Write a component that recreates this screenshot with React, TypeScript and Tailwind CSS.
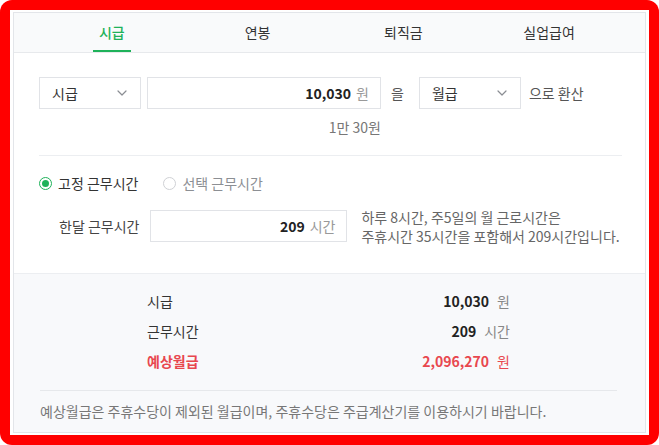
import React from "react";

const font = { fontFamily: '"Noto Sans CJK KR", "Noto Sans", sans-serif' };

function Chevron() {
  return (
    <svg width="10" height="6" viewBox="0 0 10 6" fill="none">
      <polyline points="1,1 5,5 9,1" stroke="#8a8d93" strokeWidth="1.2" strokeLinecap="round" strokeLinejoin="round" />
    </svg>
  );
}

function Select({ label }: { label: string }) {
  return (
    <div className="shrink-0 w-[102px] h-[32px] border border-[#e1e3e7] bg-white flex items-center justify-between pl-[12px] pr-[13px] text-[14px] leading-[20px] text-[#333]">
      <span>{label}</span>
      <Chevron />
    </div>
  );
}

export default function App() {
  const tabs = ["시급", "연봉", "퇴직금", "실업급여"];
  return (
    <div style={font} className="w-[659px] h-[445px] bg-[#ff0000] rounded-[12px] p-[10px] whitespace-nowrap">
      <div className="bg-white h-full px-[3px] pt-[2px] pb-[2px]">
        <div className="h-full border border-[#e3e5e9] flex flex-col bg-white">
          {/* Tabs */}
          <div className="h-[40px] shrink-0 bg-[#f9fafb] border-b border-[#e7e9ec] pl-[25px] pr-[23px] grid grid-cols-4">
            {tabs.map((t, i) => (
              <div key={t} className="flex justify-center h-full">
                <span
                  className={
                    i === 0
                      ? "h-full flex items-center px-[6px] pt-[1px] border-b-[2px] border-[#1fb25a] text-[#1fb25a] text-[14px] leading-[20px] font-medium"
                      : "h-full flex items-center px-[6px] pt-[1px] border-b-[2px] border-transparent text-[#333] text-[14px] leading-[20px]"
                  }
                >
                  {t}
                </span>
              </div>
            ))}
          </div>

          {/* Inputs */}
          <div className="shrink-0 pl-[25px] pr-[23px] pt-[24px] pb-[27px]">
            <div className="flex items-center h-[32px]">
              <Select label="시급" />
              <div className="shrink-0 ml-[6px] w-[234px] h-[32px] border border-[#e1e3e7] bg-white flex items-center justify-end pr-[11px] text-[14px] leading-[20px]">
                <span className="font-bold text-[#222]">10,030</span>
                <span className="ml-[5px] text-[#999]">원</span>
              </div>
              <span className="shrink-0 ml-[10px] mr-[15px] text-[14px] leading-[20px] text-[#555]">을</span>
              <Select label="월급" />
              <span className="shrink-0 ml-[8px] text-[14px] leading-[20px] text-[#555]">으로 환산</span>
            </div>
            <div className="w-[342px] mt-[10px] h-[16px] leading-[16px] text-right text-[14px] text-[#777]">1만 30원</div>
            <div className="mt-[20px] border-t border-[#eceef1]" />

            <div className="mt-[17px] h-[20px] flex items-center text-[14px] leading-[20px]">
              <span className="shrink-0 w-[13px] h-[13px] rounded-full border border-[#1fb25a] flex items-center justify-center bg-white">
                <span className="w-[7px] h-[7px] rounded-full bg-[#1fb25a]" />
              </span>
              <span className="ml-[6px] text-[#333]">고정 근무시간</span>
              <span className="shrink-0 ml-[25px] w-[13px] h-[13px] rounded-full border border-[#cfd1d5] bg-white" />
              <span className="ml-[6px] text-[#8c8f94]">선택 근무시간</span>
            </div>

            <div className="mt-[15px] flex items-start">
              <span className="shrink-0 mt-[8px] ml-[20px] text-[14px] leading-[20px] text-[#444]">한달 근무시간</span>
              <div className="shrink-0 mt-[2px] ml-[11px] w-[197px] h-[32px] border border-[#e1e3e7] bg-white flex items-center justify-end pr-[11px] text-[14px] leading-[20px]">
                <span className="font-bold text-[#222]">209</span>
                <span className="ml-[5px] text-[#999]">시간</span>
              </div>
              <div className="shrink-0 ml-[14px] text-[14px] leading-[19px] text-[#666]">
                <div>하루 8시간, 주5일의 월 근로시간은</div>
                <div>주휴시간 35시간을 포함해서 209시간입니다.</div>
              </div>
            </div>
          </div>

          {/* Results */}
          <div className="flex-1 bg-[#f8f9fb] border-t border-[#eceef1] pl-[26px] pr-[28px] pt-[12px]">
            <div className="ml-[107px] w-[363px] text-[14px] leading-[20px]">
              <div className="h-[30px] flex items-center justify-between">
                <span className="text-[#333]">시급</span>
                <span>
                  <span className="font-bold text-[#222]">10,030</span>
                  <span className="ml-[8px] text-[#888]">원</span>
                </span>
              </div>
              <div className="h-[30px] flex items-center justify-between">
                <span className="text-[#333]">근무시간</span>
                <span>
                  <span className="font-bold text-[#222]">209</span>
                  <span className="ml-[8px] text-[#888]">시간</span>
                </span>
              </div>
              <div className="h-[30px] flex items-center justify-between">
                <span className="text-[#e8474e] font-bold">예상월급</span>
                <span>
                  <span className="font-bold text-[#e8474e]">2,096,270</span>
                  <span className="ml-[8px] text-[#e8474e]">원</span>
                </span>
              </div>
            </div>
            <div className="mt-[14px] border-t border-[#e6e8eb]" />
            <div className="mt-[10px] h-[20px] leading-[20px] text-[14px] text-[#777]">
              예상월급은 주휴수당이 제외된 월급이며, 주휴수당은 주급계산기를 이용하시기 바랍니다.
            </div>
          </div>
        </div>
      </div>
    </div>
  );
}
